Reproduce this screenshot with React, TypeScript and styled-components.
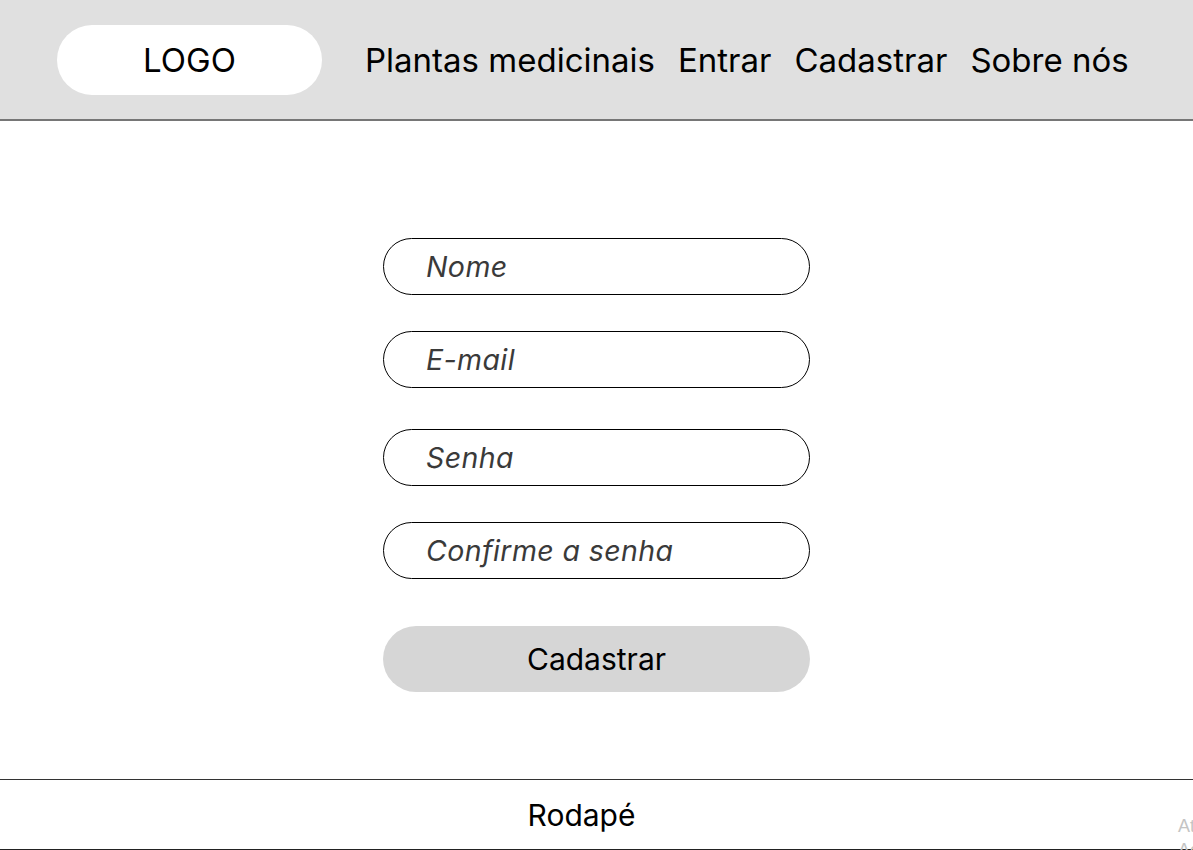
import React from "react";
import styled, { createGlobalStyle } from "styled-components";

const Global = createGlobalStyle`
  html, body { margin: 0; padding: 0; background: #ffffff; overflow: hidden; }
  body { font-family: Inter, "Noto Sans", "Liberation Sans", sans-serif; color: #000; }
  * { box-sizing: border-box; }
`;

const Page = styled.div`
  width: 1193px;
  height: 850px;
  display: flex;
  flex-direction: column;
  position: relative;
  overflow: hidden;
`;

const Header = styled.header`
  height: 121px;
  background: #e0e0e0;
  border-bottom: 2px solid #767676;
  display: flex;
  align-items: center;
  padding: 0 0 0 57px;
`;

const Logo = styled.div`
  width: 265px;
  height: 70px;
  border-radius: 35px;
  background: #ffffff;
  display: flex;
  align-items: center;
  justify-content: center;
  font-size: 33px;
  margin-right: 43px;
`;

const Nav = styled.nav`
  display: flex;
  gap: 23px;
`;

const NavLink = styled.a`
  font-size: 33px;
  color: #000;
  text-decoration: none;
`;

const Main = styled.main`
  flex: 1;
  display: flex;
  justify-content: center;
  padding-top: 117px;
`;

const Form = styled.form`
  width: 427px;
  display: flex;
  flex-direction: column;
`;

const Field = styled.div<{ $gap: number }>`
  height: 57px;
  border: 1.5px solid #000;
  border-radius: 29px;
  display: flex;
  align-items: center;
  padding-left: 42px;
  margin-bottom: ${(p) => p.$gap}px;
  font-size: 28.5px;
  letter-spacing: 0.4px;
  font-style: italic;
  color: #3a3a3a;
`;

const Button = styled.button`
  height: 66px;
  border: none;
  border-radius: 33px;
  background: #d6d6d6;
  font-family: inherit;
  font-size: 30px;
  color: #000;
  cursor: pointer;
`;

const Footer = styled.footer`
  height: 71px;
  border-top: 1.5px solid #333;
  border-bottom: 1.5px solid #222;
  display: flex;
  align-items: center;
  justify-content: center;
  padding-right: 30px;
  font-size: 30px;
`;

const Watermark = styled.div`
  position: absolute;
  left: 1178px;
  top: 814px;
  font-size: 18px;
  line-height: 24px;
  color: #c4c4c4;
  white-space: nowrap;
  font-family: "Liberation Sans", sans-serif;
`;

const fields = [
  { label: "Nome", gap: 36 },
  { label: "E-mail", gap: 41 },
  { label: "Senha", gap: 36 },
  { label: "Confirme a senha", gap: 47 },
];

export default function App() {
  return (
    <>
      <Global />
      <Page>
        <Header>
          <Logo>LOGO</Logo>
          <Nav>
            <NavLink>Plantas medicinais</NavLink>
            <NavLink>Entrar</NavLink>
            <NavLink>Cadastrar</NavLink>
            <NavLink>Sobre nós</NavLink>
          </Nav>
        </Header>
        <Main>
          <Form onSubmit={(e) => e.preventDefault()}>
            {fields.map((f) => (
              <Field key={f.label} $gap={f.gap}>
                {f.label}
              </Field>
            ))}
            <Button type="button">Cadastrar</Button>
          </Form>
        </Main>
        <Footer>Rodapé</Footer>
        <Watermark>
          Ativar o Windows
          <br />
          Acesse Configurações
        </Watermark>
      </Page>
    </>
  );
}
